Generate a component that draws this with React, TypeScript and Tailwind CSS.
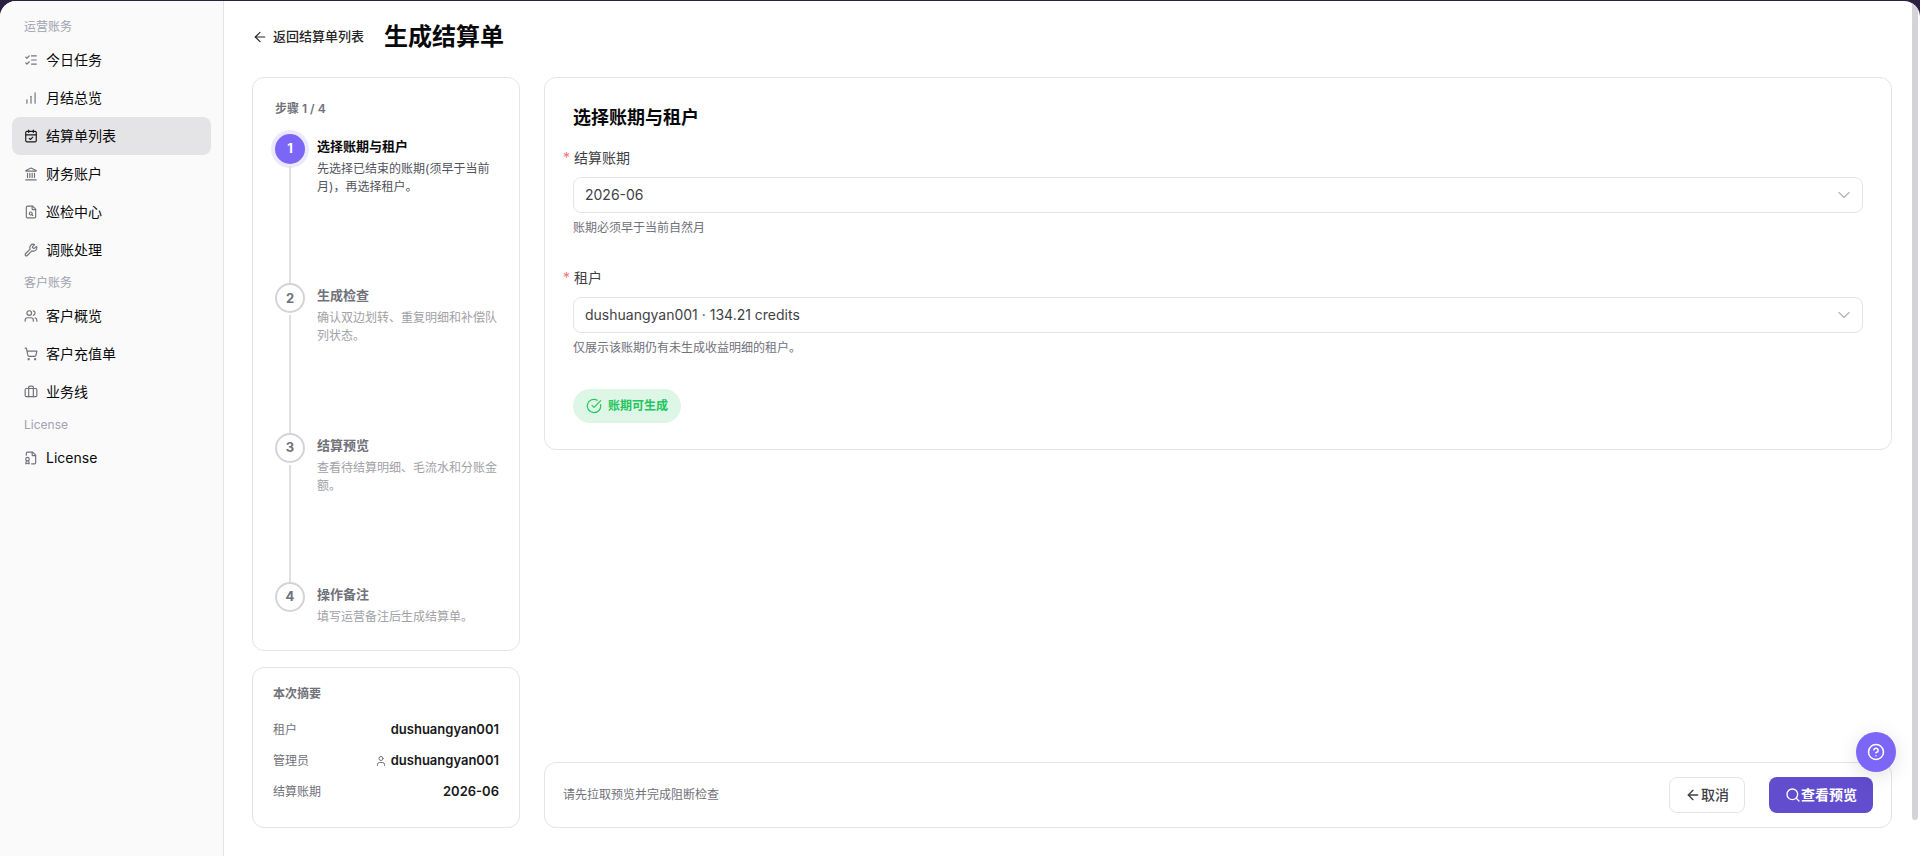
import type { ReactNode } from 'react'
import {
  ArrowLeft,
  Briefcase,
  CalendarCheck,
  ChartNoAxesColumnIncreasing,
  ChevronDown,
  CircleCheckBig,
  CircleQuestionMark,
  FileBadge,
  FileSearch,
  Landmark,
  ListChecks,
  Search,
  ShoppingCart,
  User,
  Users,
  Wrench,
} from 'lucide-react'
import type { LucideIcon } from 'lucide-react'

type NavItem = { label: string; icon: LucideIcon; active?: boolean }

const navGroups: { title: string; items: NavItem[] }[] = [
  {
    title: '运营账务',
    items: [
      { label: '今日任务', icon: ListChecks },
      { label: '月结总览', icon: ChartNoAxesColumnIncreasing },
      { label: '结算单列表', icon: CalendarCheck, active: true },
      { label: '财务账户', icon: Landmark },
      { label: '巡检中心', icon: FileSearch },
      { label: '调账处理', icon: Wrench },
    ],
  },
  {
    title: '客户账务',
    items: [
      { label: '客户概览', icon: Users },
      { label: '客户充值单', icon: ShoppingCart },
      { label: '业务线', icon: Briefcase },
    ],
  },
  { title: 'License', items: [{ label: 'License', icon: FileBadge }] },
]

const steps = [
  { title: '选择账期与租户', desc: '先选择已结束的账期(须早于当前月)，再选择租户。' },
  { title: '生成检查', desc: '确认双边划转、重复明细和补偿队列状态。' },
  { title: '结算预览', desc: '查看待结算明细、毛流水和分账金额。' },
  { title: '操作备注', desc: '填写运营备注后生成结算单。' },
]

function Sidebar() {
  return (
    <nav className="w-56 shrink-0 border-r border-[#e4e4e7] bg-[#fafafa] px-3 pt-3">
      {navGroups.map((group) => (
        <section key={group.title}>
          <h2 className="flex h-7 items-center px-3 text-xs text-[#a1a1b0]">{group.title}</h2>
          {group.items.map(({ label, icon: Icon, active }) => (
            <a
              key={label}
              href="#"
              aria-current={active ? 'page' : undefined}
              className={`flex h-[38px] items-center gap-2 rounded-lg px-3 text-sm text-[#09090b] ${active ? 'bg-[#e4e4e7]' : ''}`}
            >
              <Icon className={`size-3.5 ${active ? 'text-[#18181b]' : 'text-[#71717a]'}`} strokeWidth={2} />
              {label}
            </a>
          ))}
        </section>
      ))}
    </nav>
  )
}

function StepsCard() {
  const current = 0
  return (
    <section className="flex flex-1 flex-col rounded-xl border border-[#e4e4e7] px-[22px] pt-[23px] pb-6">
      <h2 className="text-xs leading-4 font-semibold text-[#71717a]">步骤 1 / 4</h2>
      <ol className="mt-[17px] flex flex-1 flex-col">
        {steps.map((step, i) => {
          const active = i === current
          const last = i === steps.length - 1
          return (
            <li key={step.title} className={`flex gap-3 ${last ? '' : 'flex-1'}`}>
              <div className="flex flex-col items-center">
                <span
                  className={`flex size-[30px] shrink-0 items-center justify-center rounded-full text-[13px] font-bold ${
                    active ? 'bg-[#7c66f7] text-white ring-4 ring-[#ece8fe]' : 'border-2 border-[#d4d4d8] text-[#71717a]'
                  }`}
                >
                  {i + 1}
                </span>
                {!last && <span className="mt-0.5 w-0.5 flex-1 bg-[#e0e0e3]" />}
              </div>
              <div className="flex-1 pt-[3px]">
                <h3 className={`text-[13px] leading-[18px] font-semibold ${active ? 'text-[#09090b]' : 'text-[#71717a]'}`}>
                  {step.title}
                </h3>
                <p className={`mt-[5px] text-xs leading-[18px] ${active ? 'text-[#52525b]' : 'text-[#a1a1a6]'}`}>{step.desc}</p>
              </div>
            </li>
          )
        })}
      </ol>
    </section>
  )
}

function SummaryRow({ label, children }: { label: string; children: ReactNode }) {
  return (
    <div className="flex h-[31px] items-center justify-between">
      <dt className="text-xs text-[#71717a]">{label}</dt>
      <dd className="flex items-center gap-1 text-[13px] font-semibold text-[#18181b]">{children}</dd>
    </div>
  )
}

function SummaryCard() {
  return (
    <section className="rounded-xl border border-[#e4e4e7] px-5 pt-[18px] pb-5">
      <h2 className="text-xs leading-4 font-semibold text-[#71717a]">本次摘要</h2>
      <dl className="mt-3">
        <SummaryRow label="租户">dushuangyan001</SummaryRow>
        <SummaryRow label="管理员">
          <User className="size-3 text-[#71717a]" strokeWidth={2} />
          dushuangyan001
        </SummaryRow>
        <SummaryRow label="结算账期">2026-06</SummaryRow>
      </dl>
    </section>
  )
}

function SelectField({ id, label, value, help }: { id: string; label: string; value: string; help: string }) {
  return (
    <div className="mb-[29px]">
      <label htmlFor={id} className="-ml-2.5 flex items-center gap-1 text-sm leading-[22px] text-[#3f3f46]">
        <span className="text-[#f87171]">*</span>
        {label}
      </label>
      <div className="relative mt-2">
        <select
          id={id}
          className="block h-9 w-full appearance-none rounded-lg border border-[#e4e4e7] bg-transparent px-[11px] text-sm text-[#3f3f46]"
        >
          <option>{value}</option>
        </select>
        <ChevronDown className="pointer-events-none absolute top-2 right-[9px] size-5 text-[#b4b4bb]" strokeWidth={1.5} />
      </div>
      <p className="mt-[5px] text-xs leading-5 text-[#71717a]">{help}</p>
    </div>
  )
}

export default function App() {
  return (
    <div className="min-h-screen bg-[#2b1f42] pt-px font-['Inter','Noto_Sans_CJK_SC',sans-serif]">
      <div className="relative flex min-h-[calc(100vh-1px)] overflow-hidden rounded-t-2xl bg-white">
        <Sidebar />
        <main className="flex min-w-0 flex-1 flex-col px-7 pb-7">
          <header className="flex h-[76px] items-center gap-5 pb-1">
            <a href="#" className="flex items-center gap-[5px] text-[13px] font-medium text-[#27272a]">
              <ArrowLeft className="size-4" strokeWidth={1.75} />
              返回结算单列表
            </a>
            <h1 className="text-2xl font-bold text-[#09090b]">生成结算单</h1>
          </header>
          <div className="flex flex-1 gap-6">
            <aside className="flex w-[268px] shrink-0 flex-col gap-4">
              <StepsCard />
              <SummaryCard />
            </aside>
            <div className="flex min-w-0 flex-1 flex-col justify-between">
              <section className="rounded-xl border border-[#e4e4e7] px-7 py-[26px]">
                <h2 className="mb-[15px] text-lg leading-7 font-semibold text-[#09090b]">选择账期与租户</h2>
                <SelectField id="period" label="结算账期" value="2026-06" help="账期必须早于当前自然月" />
                <SelectField
                  id="tenant"
                  label="租户"
                  value="dushuangyan001 · 134.21 credits"
                  help="仅展示该账期仍有未生成收益明细的租户。"
                />
                <p className="mt-[31px] flex h-[34px] w-fit items-center gap-1.5 rounded-full bg-[#def6e6] px-[13px] text-xs font-semibold text-[#22c55e]">
                  <CircleCheckBig className="size-4" strokeWidth={1.75} />
                  账期可生成
                </p>
              </section>
              <footer className="flex items-center justify-between rounded-xl border border-[#e4e4e7] px-[18px] py-3.5">
                <p className="text-xs text-[#71717a]">请先拉取预览并完成阻断检查</p>
                <div className="flex gap-6">
                  <button
                    type="button"
                    className="flex h-9 items-center rounded-lg border border-[#e4e4e7] px-[15px] text-sm font-medium text-[#3f3f46]"
                  >
                    <ArrowLeft className="size-4" strokeWidth={2} />
                    取消
                  </button>
                  <button
                    type="button"
                    className="flex h-9 items-center rounded-lg bg-[#614dce] px-4 text-sm font-semibold text-white"
                  >
                    <Search className="size-4" strokeWidth={2} />
                    查看预览
                  </button>
                </div>
              </footer>
            </div>
          </div>
        </main>
        <div className="absolute top-0 right-0.5 bottom-9 w-1.5 rounded-b-full bg-[#d4d4d8]" />
      </div>
      <button
        type="button"
        aria-label="帮助"
        className="fixed right-6 bottom-[84px] flex size-10 items-center justify-center rounded-full bg-[#7c66f7] text-white shadow-[0_4px_20px_rgba(0,0,0,0.12)]"
      >
        <CircleQuestionMark className="size-[18px]" />
      </button>
    </div>
  )
}
